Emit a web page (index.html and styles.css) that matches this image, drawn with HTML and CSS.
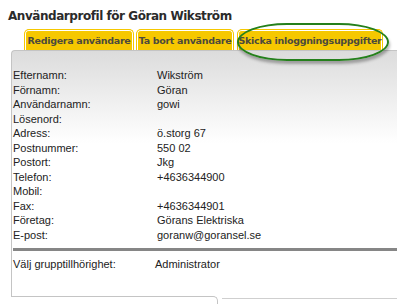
FILE: index.html
```html
<!DOCTYPE html>
<html lang="sv">
    <head>
        <meta charset="UTF-8" />
        <title>Användarprofil</title>
        <link rel="stylesheet" href="styles.css">
    </head>
    <body>
        <div class="page">
            <h1 class="title">Användarprofil för Göran Wikström</h1>

            <div class="tabs">
                <a class="tab tab-edit">Redigera användare</a>
                <a class="tab tab-remove">Ta bort användare</a>
                <a class="tab tab-send">Skicka inloggningsuppgifter</a>
                <span class="ring"></span>
            </div>

            <div class="panel">
                <div class="fields">
                    <span class="label">Efternamn:</span><span class="value">Wikström</span>
                    <span class="label">Förnamn:</span><span class="value">Göran</span>
                    <span class="label">Användarnamn:</span><span class="value">gowi</span>
                    <span class="label">Lösenord:</span><span class="value"></span>
                    <span class="label">Adress:</span><span class="value">ö.storg 67</span>
                    <span class="label">Postnummer:</span><span class="value">550 02</span>
                    <span class="label">Postort:</span><span class="value">Jkg</span>
                    <span class="label">Telefon:</span><span class="value">+4636344900</span>
                    <span class="label">Mobil:</span><span class="value"></span>
                    <span class="label">Fax:</span><span class="value">+4636344901</span>
                    <span class="label">Företag:</span><span class="value">Görans Elektriska</span>
                    <span class="label">E-post:</span><span class="value">goranw@goransel.se</span>
                </div>

                <div class="divider"></div>

                <div class="fields group">
                    <span class="label">Välj grupptillhörighet:</span><span class="value">Administrator</span>
                </div>
            </div>

            <div class="panel-foot">
                <div class="foot-left"></div>
                <div class="foot-right"></div>
            </div>
        </div>
    </body>
</html>
```

FILE: styles.css
```css
body {
    margin: 0;
    background: #fff;
}

.page {
    padding-top: 8px;
    width: 397px;
    height: 304px;
    overflow: hidden;
}

.title {
    margin: 0 0 0 8px;
    font-family: "DejaVu Sans", sans-serif;
    font-weight: bold;
    font-size: 12px;
    letter-spacing: -0.45px;
    line-height: 16px;
    color: #2b2b2b;
}

.tabs {
    position: relative;
    display: flex;
    margin: 5px 0 0 24px;
}

.tab {
    display: block;
    box-sizing: border-box;
    padding-top: 1px;
    border: 1px solid #f5c700;
    border-bottom: none;
    border-radius: 5px 5px 0 0;
    background: #f6c800;
    box-shadow: inset 1px 0 #fff, inset -1px 0 #fff, inset 0 1px #fff;
    font-family: "DejaVu Sans", sans-serif;
    font-weight: bold;
    font-size: 9.5px;
    letter-spacing: -0.3px;
    line-height: 19px;
    color: #4c4a3c;
    text-align: center;
    white-space: nowrap;
}

.tab-edit {
    width: 110px;
}

.tab-remove {
    width: 98px;
    margin-left: 2px;
}

.tab-send {
    width: 146px;
    margin-left: 3px;
}

/* green marker drawn round the third tab */
.ring {
    position: absolute;
    left: 213px;
    top: -6px;
    width: 148px;
    height: 34px;
    border: 2px solid #25801c;
    border-radius: 50px / 19px;
    box-shadow: 1px 3px 3px rgba(0, 0, 0, 0.3);
}

.panel {
    box-sizing: border-box;
    height: 246px;
    margin-left: 11px;
    padding-top: 17px;
    border-top: 1px solid #c4c4c4;
    border-left: 1px solid #c4c4c4;
    border-top-left-radius: 4px;
    background: linear-gradient(#dcdcdc 0, #ffffff 92px);
}

.fields {
    display: grid;
    grid-template-columns: 144px 1fr;
    padding-left: 1px;
    font-family: "Liberation Sans", Arial, sans-serif;
    font-size: 11px;
    line-height: 14.5px;
    color: #222;
}

.label,
.value {
    height: 14.5px;
}

.divider {
    margin: 6px 0 0 1px;
    height: 3px;
    background: #868686;
}

.group {
    margin-top: 6px;
}

.group .value {
    margin-left: -2px;
}

.panel-foot {
    display: flex;
    margin-left: 11px;
}

.foot-left {
    width: 206px;
    height: 10px;
    border-top: 1px solid #c4c4c4;
    border-right: 1px solid #c4c4c4;
    border-top-right-radius: 5px;
}

.foot-right {
    flex: 1;
    margin: 2px 0 0 4px;
    border-top: 1px solid #cfcfcf;
}
```
